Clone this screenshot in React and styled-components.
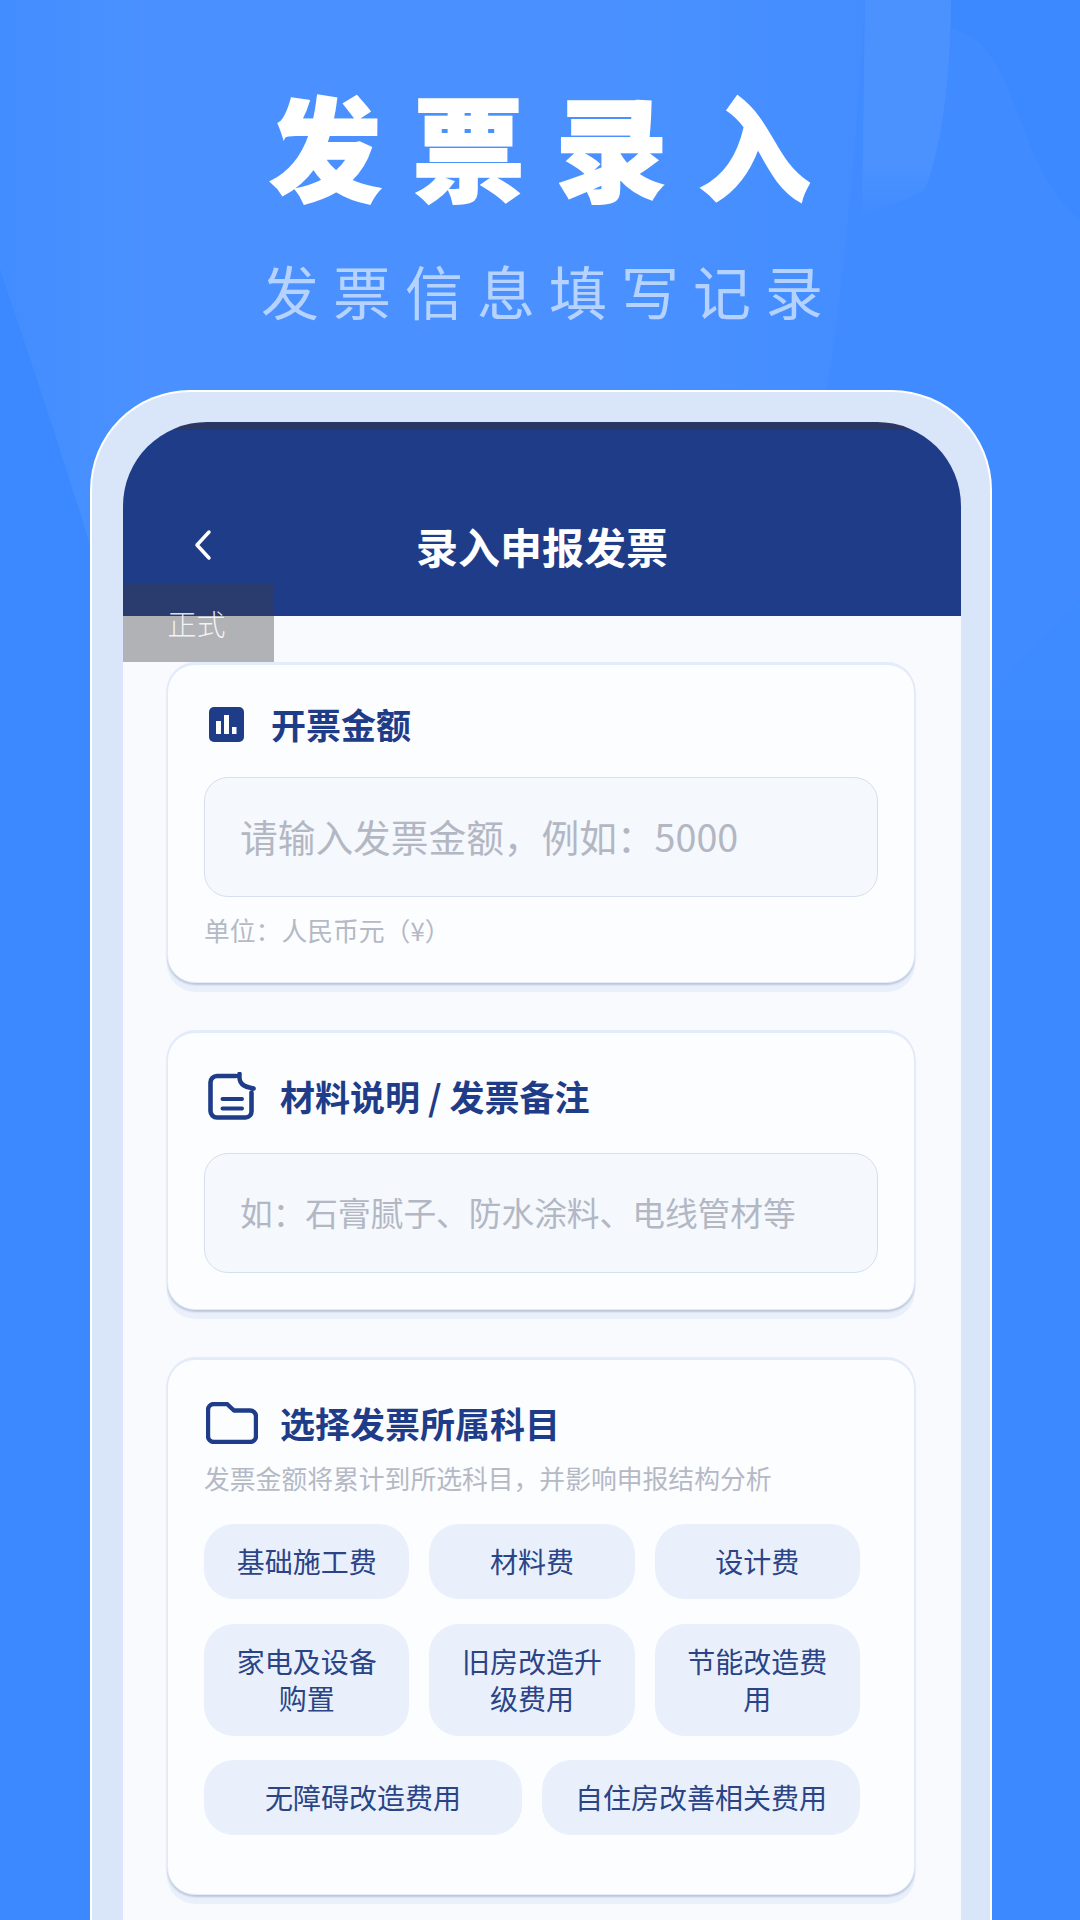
import styled, { createGlobalStyle } from "styled-components";

const GlobalStyle = createGlobalStyle`
    html, body {
        margin: 0;
        padding: 0;
    }
    body {
        font-family: "Noto Sans CJK SC", "Noto Sans", sans-serif;
    }
    * {
        box-sizing: border-box;
    }
`;

const Page = styled.div`
    position: relative;
    width: 1080px;
    height: 1920px;
    overflow: hidden;
    background: #3b88ff;
`;

const Backdrop = styled.svg`
    position: absolute;
    top: 0;
    left: 0;
`;

const Hero = styled.header`
    position: relative;
    padding-top: 88px;
    text-align: center;
    color: #fff;
`;

const HeroTitle = styled.h1`
    margin: 0;
    padding-left: 31px;
    font-size: 112px;
    line-height: 112px;
    font-weight: 900;
    letter-spacing: 31px;
    -webkit-text-stroke: 2px #fff;
`;

const HeroSub = styled.p`
    margin: 60px 0 0;
    padding-left: 18px;
    font-size: 58px;
    line-height: 60px;
    font-weight: 400;
    letter-spacing: 14px;
    color: rgba(255, 255, 255, 0.6);
`;

const Frame = styled.div`
    position: relative;
    width: 902px;
    margin: 70px 0 0 90px;
    padding: 30px 29px 0 31px;
    background: #d9e6fa;
    border: 2px solid #fff;
    border-bottom: none;
    border-radius: 100px 100px 0 0;
`;

const Screen = styled.div`
    position: relative;
    background: #f8fafe;
    border-radius: 84px 84px 0 0;
    overflow: hidden;
`;

const StatusStrip = styled.div`
    height: 8px;
    background: #2a3663;
`;

const NavBar = styled.div`
    display: grid;
    grid-template-columns: 1fr auto 1fr;
    align-items: center;
    align-content: end;
    height: 186px;
    padding-bottom: 45px;
    background: #1f3c88;
`;

const BackButton = styled.button`
    display: flex;
    width: 22px;
    margin: 0 0 2px 71px;
    padding: 0;
    border: none;
    background: none;
`;

const NavTitle = styled.div`
    font-size: 42px;
    line-height: 50px;
    font-weight: 700;
    color: #fff;
`;

const EnvTag = styled.div`
    position: absolute;
    top: 162px;
    left: 0;
    display: flex;
    align-items: center;
    justify-content: center;
    width: 151px;
    height: 78px;
    padding-right: 4px;
    font-size: 29px;
    font-weight: 300;
    color: rgba(255, 255, 255, 0.85);
    background: rgba(60, 60, 65, 0.38);
`;

const Body = styled.main`
    display: flex;
    flex-direction: column;
    gap: 49px;
    padding: 48px 46px 60px 44px;
`;

const Card = styled.section`
    padding: ${(props) => props.$top}px 36px ${(props) => props.$bottom}px;
    background: #fcfdff;
    border: 1px solid #e3ebfa;
    border-radius: 28px;
    box-shadow: 0 2px 2px #bcc6d8, 0 9px 0 #e9f0fb, 0 -2px 0 #e4ecfa;
`;

const Heading = styled.div`
    display: flex;
    align-items: center;
    gap: 22px;
    height: 48px;
`;

const IconSlot = styled.div`
    display: flex;
    flex: none;
    align-items: center;
    width: ${(props) => props.$width}px;
    padding-left: ${(props) => props.$inset}px;
`;

const CardTitle = styled.h2`
    margin: 0;
    font-size: 35px;
    line-height: 48px;
    font-weight: 700;
    color: #1f3c88;
`;

const Field = styled.div`
    display: flex;
    align-items: center;
    height: 120px;
    margin-top: ${(props) => props.$gap}px;
    padding: 0 0 4px 35px;
    font-size: ${(props) => props.$size}px;
    color: #b2b7c3;
    background: #f5f8fd;
    border: 1.5px solid #d6dfef;
    border-radius: 24px;
`;

const Hint = styled.p`
    margin: ${(props) => props.$gap}px 0 0;
    font-size: 25.8px;
    line-height: 36px;
    color: #b4b9c5;
`;

const ChipGrid = styled.div`
    display: grid;
    grid-template-columns: repeat(${(props) => props.$cols}, 1fr);
    gap: 25px 20px;
    width: 656px;
    margin-top: ${(props) => props.$gap || 24}px;
`;

const Chip = styled.div`
    display: flex;
    align-items: center;
    justify-content: center;
    padding: 19px 28px;
    font-size: 28px;
    line-height: 37px;
    text-align: center;
    color: #2b4486;
    background: #e9f0fb;
    border-radius: 30px;
`;

const topChips = [
    "基础施工费",
    "材料费",
    "设计费",
    "家电及设备购置",
    "旧房改造升级费用",
    "节能改造费用",
];

const bottomChips = ["无障碍改造费用", "自住房改善相关费用"];

const App = () => {
    return (
        <Page>
            <GlobalStyle />
            <Backdrop width="1080" height="720" viewBox="0 0 1080 720">
                <defs>
                    <linearGradient id="heroGlow" x1="0" y1="0" x2="1" y2="0">
                        <stop offset="0" stopColor="#428dff" />
                        <stop offset="0.16" stopColor="#4a91ff" />
                        <stop offset="0.72" stopColor="#4a91ff" />
                        <stop offset="1" stopColor="#438dff" />
                    </linearGradient>
                    <linearGradient id="bandFade" x1="0" y1="0" x2="0" y2="1">
                        <stop offset="0" stopColor="#4b92ff" />
                        <stop offset="0.75" stopColor="#4b92ff" />
                        <stop offset="1" stopColor="#4b92ff" stopOpacity="0" />
                    </linearGradient>
                </defs>
                <path
                    d="M951 28C990 38 1002 72 1020 118C1034 155 1050 195 1080 220V720H800V0H951Z"
                    fill="#3f8bff"
                />
                <path
                    d="M0 0H865C858 120 845 280 825 400L815 720H140C90 530 30 360 0 269Z"
                    fill="url(#heroGlow)"
                />
                <path d="M865 0H951C950 70 945 135 925 190C905 200 880 208 862 220Z" fill="url(#bandFade)" />
                <path d="M1080 598L990 696V720H1080Z" fill="#3e8aff" />
            </Backdrop>

            <Hero>
                <HeroTitle>发票录入</HeroTitle>
                <HeroSub>发票信息填写记录</HeroSub>
            </Hero>

            <Frame>
                <Screen>
                    <StatusStrip />
                    <NavBar>
                        <BackButton>
                            <svg width="18" height="32" viewBox="0 0 18 32" fill="none">
                                <path
                                    d="M15 3L3 16L15 29"
                                    stroke="#fff"
                                    strokeWidth="3.5"
                                    strokeLinecap="round"
                                    strokeLinejoin="round"
                                />
                            </svg>
                        </BackButton>
                        <NavTitle>录入申报发票</NavTitle>
                    </NavBar>
                    <EnvTag>正式</EnvTag>

                    <Body>
                        <Card $top={35} $bottom={34}>
                            <Heading>
                                <IconSlot $width={45} $inset={5}>
                                    <svg width="35" height="35" viewBox="0 0 35 35">
                                        <rect width="35" height="35" rx="5" fill="#1f3c88" />
                                        <rect x="7" y="14" width="5" height="13" fill="#fff" />
                                        <rect x="15" y="8" width="5" height="19" fill="#fff" />
                                        <rect x="23" y="20" width="4.5" height="7" fill="#fff" />
                                    </svg>
                                </IconSlot>
                                <CardTitle>开票金额</CardTitle>
                            </Heading>
                            <Field $gap={29} $size={37.7}>请输入发票金额，例如：5000</Field>
                            <Hint $gap={15}>单位：人民币元（¥）</Hint>
                        </Card>

                        <Card $top={39} $bottom={36}>
                            <Heading>
                                <IconSlot $width={54} $inset={4}>
                                    <svg width="48" height="48" viewBox="0 0 48 48" fill="none">
                                        <path
                                            d="M28 4H9a6.5 6.5 0 0 0-6.5 6.5V39a6.5 6.5 0 0 0 6.5 6.5H37.5a6 6 0 0 0 6-6V20.5M31.5 2C31 8 32 11 36 13.5C39 15.5 42 15.5 45.5 16.5"
                                            stroke="#1f3c88"
                                            strokeWidth="4.6"
                                            strokeLinecap="round"
                                            strokeLinejoin="round"
                                        />
                                        <path
                                            d="M14.5 27H34M14.5 36.5H34"
                                            stroke="#1f3c88"
                                            strokeWidth="4"
                                            strokeLinecap="round"
                                        />
                                    </svg>
                                </IconSlot>
                                <CardTitle>材料说明 / 发票备注</CardTitle>
                            </Heading>
                            <Field $gap={33} $size={32.7}>如：石膏腻子、防水涂料、电线管材等</Field>
                        </Card>

                        <Card $top={39} $bottom={59}>
                            <Heading>
                                <IconSlot $width={54} $inset={2}>
                                    <svg width="52" height="42" viewBox="0 0 52 42" fill="none">
                                        <path
                                            d="M2 8a6 6 0 0 1 6-6H21L28 8.5H44a6 6 0 0 1 6 6V34a6 6 0 0 1-6 6H8a6 6 0 0 1-6-6Z"
                                            stroke="#1f3c88"
                                            strokeWidth="4.4"
                                            strokeLinejoin="round"
                                        />
                                    </svg>
                                </IconSlot>
                                <CardTitle>选择发票所属科目</CardTitle>
                            </Heading>
                            <Hint $gap={13}>发票金额将累计到所选科目，并影响申报结构分析</Hint>
                            <ChipGrid $cols={3} $gap={28}>
                                {topChips.map((name) => (
                                    <Chip key={name}>{name}</Chip>
                                ))}
                            </ChipGrid>
                            <ChipGrid $cols={2}>
                                {bottomChips.map((name) => (
                                    <Chip key={name}>{name}</Chip>
                                ))}
                            </ChipGrid>
                        </Card>
                    </Body>
                </Screen>
            </Frame>
        </Page>
    );
};

export default App;
